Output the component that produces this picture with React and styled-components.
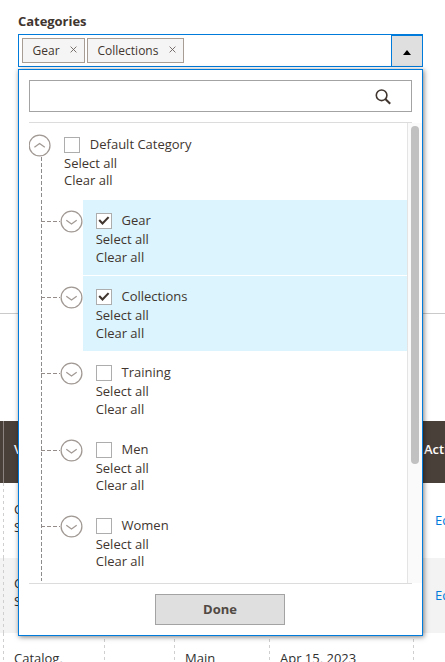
import React from "react";
import styled, { createGlobalStyle } from "styled-components";

const GlobalStyle = createGlobalStyle`
  *, *::before, *::after { box-sizing: border-box; }
  html, body { margin: 0; overflow: hidden; background: #fff; }
  body { font: 13px/17.7px "Open Sans", "Noto Sans", sans-serif; color: #41362f; }
`;

const Page = styled.main`
  position: relative;
  width: 445px;
  height: 662px;
  overflow: hidden;
`;

const Field = styled.section`
  height: 314px;
  padding: 12px 22px 0 18px;
  border-bottom: 1px solid #cacaca;
`;

const FieldLabel = styled.div`
  height: 22px;
  line-height: 18px;
  font-weight: 700;
  letter-spacing: -0.04px;
`;

const MultiSelect = styled.div`
  position: relative;
  display: flex;
  gap: 2px;
  height: 33px;
  padding: 3px 0 0 3px;
  border: 1px solid #007bdb;
`;

const Chip = styled.span`
  display: flex;
  align-items: flex-start;
  justify-content: space-between;
  width: ${(p) => p.$width}px;
  height: 25px;
  padding: 3px 7px 0 9.5px;
  font-size: 12px;
  line-height: 18px;
  border: 1px solid #a79d95;
  background: #f5f5f5;

  svg { margin-top: 4px; }
`;

const Toggle = styled.button`
  display: flex;
  align-items: center;
  justify-content: center;
  width: 32px;
  height: 33px;
  margin: -4px -1px 0 auto;
  padding: 3px 0 0;
  border: 1px solid #007bdb;
  border-top-width: 2px;
  background: #dfdfdf;
`;

const Panel = styled.div`
  position: absolute;
  z-index: 2;
  top: 34px;
  left: -1px;
  display: flex;
  flex-direction: column;
  width: 405px;
  height: 567px;
  padding: 10px 0 0 10px;
  border: 1px solid #007bdb;
  background: #fff;
  box-shadow: 1px 1px 5px rgba(0, 0, 0, 0.5);
`;

const Search = styled.div`
  display: flex;
  align-items: center;
  justify-content: flex-end;
  flex: none;
  width: 383px;
  height: 32px;
  padding: 1px 19.5px 0 0;
  border: 1px solid #a3a3a3;
`;

const Divider = styled.div`
  flex: none;
  width: 383px;
  height: 1px;
  margin-top: ${(p) => p.$gap || 0}px;
  background: #dcdcdc;
`;

const Scroller = styled.div`
  display: flex;
  height: 460px;
  overflow: hidden;
`;

const Tree = styled.div`
  width: 378px;
`;

const Scrollbar = styled.div`
  width: 15px;
  padding: 3px 3px 0;
  border-left: 1px solid #e4e4e4;
  background: #fafafa;
`;

const Thumb = styled.div`
  width: 8px;
  height: 338px;
  border-radius: 4px;
  background: #c1c1c1;
`;

const RootRow = styled.div`
  display: flex;
  height: 77px;
`;

const trunk = "repeating-linear-gradient(#8c8c8c 0 4px, transparent 4px 6px)";

const TrunkTop = styled.div`
  width: 1px;
  height: 42px;
  margin-left: 12px;
  background: ${trunk};
`;

const Branch = styled.div`
  margin-left: 12px;
  background: ${trunk} left top / 1px 100% no-repeat;
`;

const ChildRow = styled.div`
  display: flex;
  height: 76.2px;
`;

const Connector = styled.div`
  display: flex;
  flex: none;
  width: 42px;
  padding-top: 10px;
`;

const RootKnob = styled.div`
  flex: none;
  width: 35px;
  padding-top: 11px;

  svg { display: block; }
`;

const Elbow = styled.div`
  width: 19px;
  height: 1px;
  margin-top: 11px;
  background: repeating-linear-gradient(90deg, #938c88 0 4px, transparent 4px 6px);
`;

const Entry = styled.div`
  flex: 1;
  height: ${(p) => (p.$root ? "auto" : "75.2px")};
  padding: ${(p) => (p.$root ? "13px 0 0" : "12px 0 0 12.7px")};
  background: ${(p) => (p.$selected ? "#dbf4fe" : "transparent")};
`;

const Option = styled.div`
  display: flex;
  gap: 9.8px;
  height: 19px;
`;

const OptionText = styled.span`
  display: block;
  height: 17.7px;
`;

const Check = styled.span`
  display: flex;
  flex: none;
  width: 16px;
  height: 16px;
  margin-top: 1px;
  border: 1px solid #adadad;
  background: #fff;
`;

const TextAction = styled.div`
  height: ${(p) => (p.$root ? 17 : 17.6)}px;
  line-height: 17.6px;
`;

const Footer = styled.div`
  display: flex;
  justify-content: center;
  padding: 10px 11px 0 0;
`;

const Done = styled.button`
  width: 130px;
  height: 31px;
  margin-right: 1px;
  padding: 0 0 0 1px;
  border: 1px solid #a3a3a3;
  background: #dfdfdf;
  color: #514943;
  font: 700 13px/17px "Open Sans", sans-serif;
`;

const Listing = styled.section`
  margin-top: 107px;
`;

const Record = styled.div`
  display: grid;
  grid-template-columns: 4px 101px 70px 95px 144px 1fr;
  height: ${(p) => p.$height}px;
  background: ${(p) => p.$fill || "#fff"};
`;

const dashes = "repeating-linear-gradient(#cfcfcf 0 3px, transparent 3px 6px)";

const Cell = styled.div`
  min-width: 0;
  padding: ${(p) => p.$top ?? 0}px 0 0 ${(p) => (p.children ? p.$left ?? 10 : 0)}px;
  white-space: pre-line;
  background: ${(p) => (p.$last ? "none" : dashes)} right top / 1px 100% no-repeat;
  color: ${(p) => (p.$link ? "#007bdb" : "#303030")};
`;

const HeadCell = styled.div`
  min-width: 0;
  padding: 20px 0 0 ${(p) => (p.children ? 10 : 0)}px;
  border-right: 1px solid #8a837f;
  color: #fff;
  font-weight: 600;

  &:last-child { border-right: 0; }
`;

function Knob({ up }) {
  const cx = up ? 10.6 : 11.5;
  return (
    <svg width="23" height="23" viewBox="0 0 23 23" fill="none" stroke="#a09893" strokeWidth="1.25">
      <circle cx={cx} cy="11.5" r="10.4" />
      <path d={up ? "M5.4 13.2 10.6 9.5l5.2 3.7" : "M6.3 10.3 11.5 14l5.2-3.7"} />
    </svg>
  );
}

function Tick() {
  return (
    <svg width="14" height="14" viewBox="0 0 14 14" fill="none" stroke="#41362f" strokeWidth="2.1">
      <path d="m2.2 6.1 3.3 3.4 6.1-6.4" />
    </svg>
  );
}

function Cross() {
  return (
    <svg width="7" height="7" viewBox="0 0 7 7" stroke="#6b625d" strokeWidth=".9">
      <path d="m.6.6 5.8 5.8M6.4.6.6 6.4" />
    </svg>
  );
}

function Category({ name, selected, root }) {
  return (
    <Entry $selected={selected} $root={root}>
      <Option>
        <Check>{selected && <Tick />}</Check>
        <OptionText>{name}</OptionText>
      </Option>
      <TextAction $root={root}>Select all</TextAction>
      <TextAction $root={root}>Clear all</TextAction>
    </Entry>
  );
}

const subcategories = [
  { name: "Gear", selected: true },
  { name: "Collections", selected: true },
  { name: "Training" },
  { name: "Men" },
  { name: "Women" },
];

export default function App() {
  return (
    <Page>
      <GlobalStyle />
      <Field>
        <FieldLabel>Categories</FieldLabel>
        <MultiSelect>
          <Chip $width={63}>Gear<Cross /></Chip>
          <Chip $width={97}>Collections<Cross /></Chip>
          <Toggle aria-label="Close categories">
            <svg width="8" height="5" viewBox="0 0 8 5"><path d="M4 0 8 5H0Z" fill="#000" /></svg>
          </Toggle>
          <Panel>
            <Search>
              <svg width="18" height="18" viewBox="0 0 18 18" fill="none" stroke="#41362f">
                <circle cx="7.6" cy="7.3" r="5.3" strokeWidth="1.6" />
                <path d="m11.3 11 4.9 4.8" strokeWidth="2.1" />
              </svg>
            </Search>
            <Divider $gap={10} />
            <Scroller>
              <Tree>
                <RootRow>
                  <RootKnob><Knob up /><TrunkTop /></RootKnob>
                  <Category name="Default Category" root />
                </RootRow>
                <Branch>
                  {subcategories.map((item) => (
                    <ChildRow key={item.name}>
                      <Connector><Elbow /><Knob /></Connector>
                      <Category {...item} />
                    </ChildRow>
                  ))}
                </Branch>
              </Tree>
              <Scrollbar><Thumb /></Scrollbar>
            </Scroller>
            <Divider />
            <Footer><Done>Done</Done></Footer>
          </Panel>
        </MultiSelect>
      </Field>
      <Listing>
        <Record $height={62} $fill="#4a403a">
          <HeadCell /><HeadCell>Visibility</HeadCell><HeadCell /><HeadCell /><HeadCell /><HeadCell>Action</HeadCell>
        </Record>
        <Record $height={75}>
          <Cell /><Cell $top={18}>{"Catalog,\nSearch"}</Cell><Cell /><Cell /><Cell /><Cell $top={29} $left={21} $link $last>Edit</Cell>
        </Record>
        <Record $height={75} $fill="#f3f3f3">
          <Cell /><Cell $top={17}>{"Catalog,\nSearch"}</Cell><Cell /><Cell /><Cell /><Cell $top={29} $left={21} $link $last>Edit</Cell>
        </Record>
        <Record $height={75}>
          <Cell /><Cell $top={17}>{"Catalog,\nSearch"}</Cell><Cell /><Cell $top={17}>Main</Cell><Cell $top={17}>Apr 15, 2023</Cell><Cell $last />
        </Record>
      </Listing>
    </Page>
  );
}
